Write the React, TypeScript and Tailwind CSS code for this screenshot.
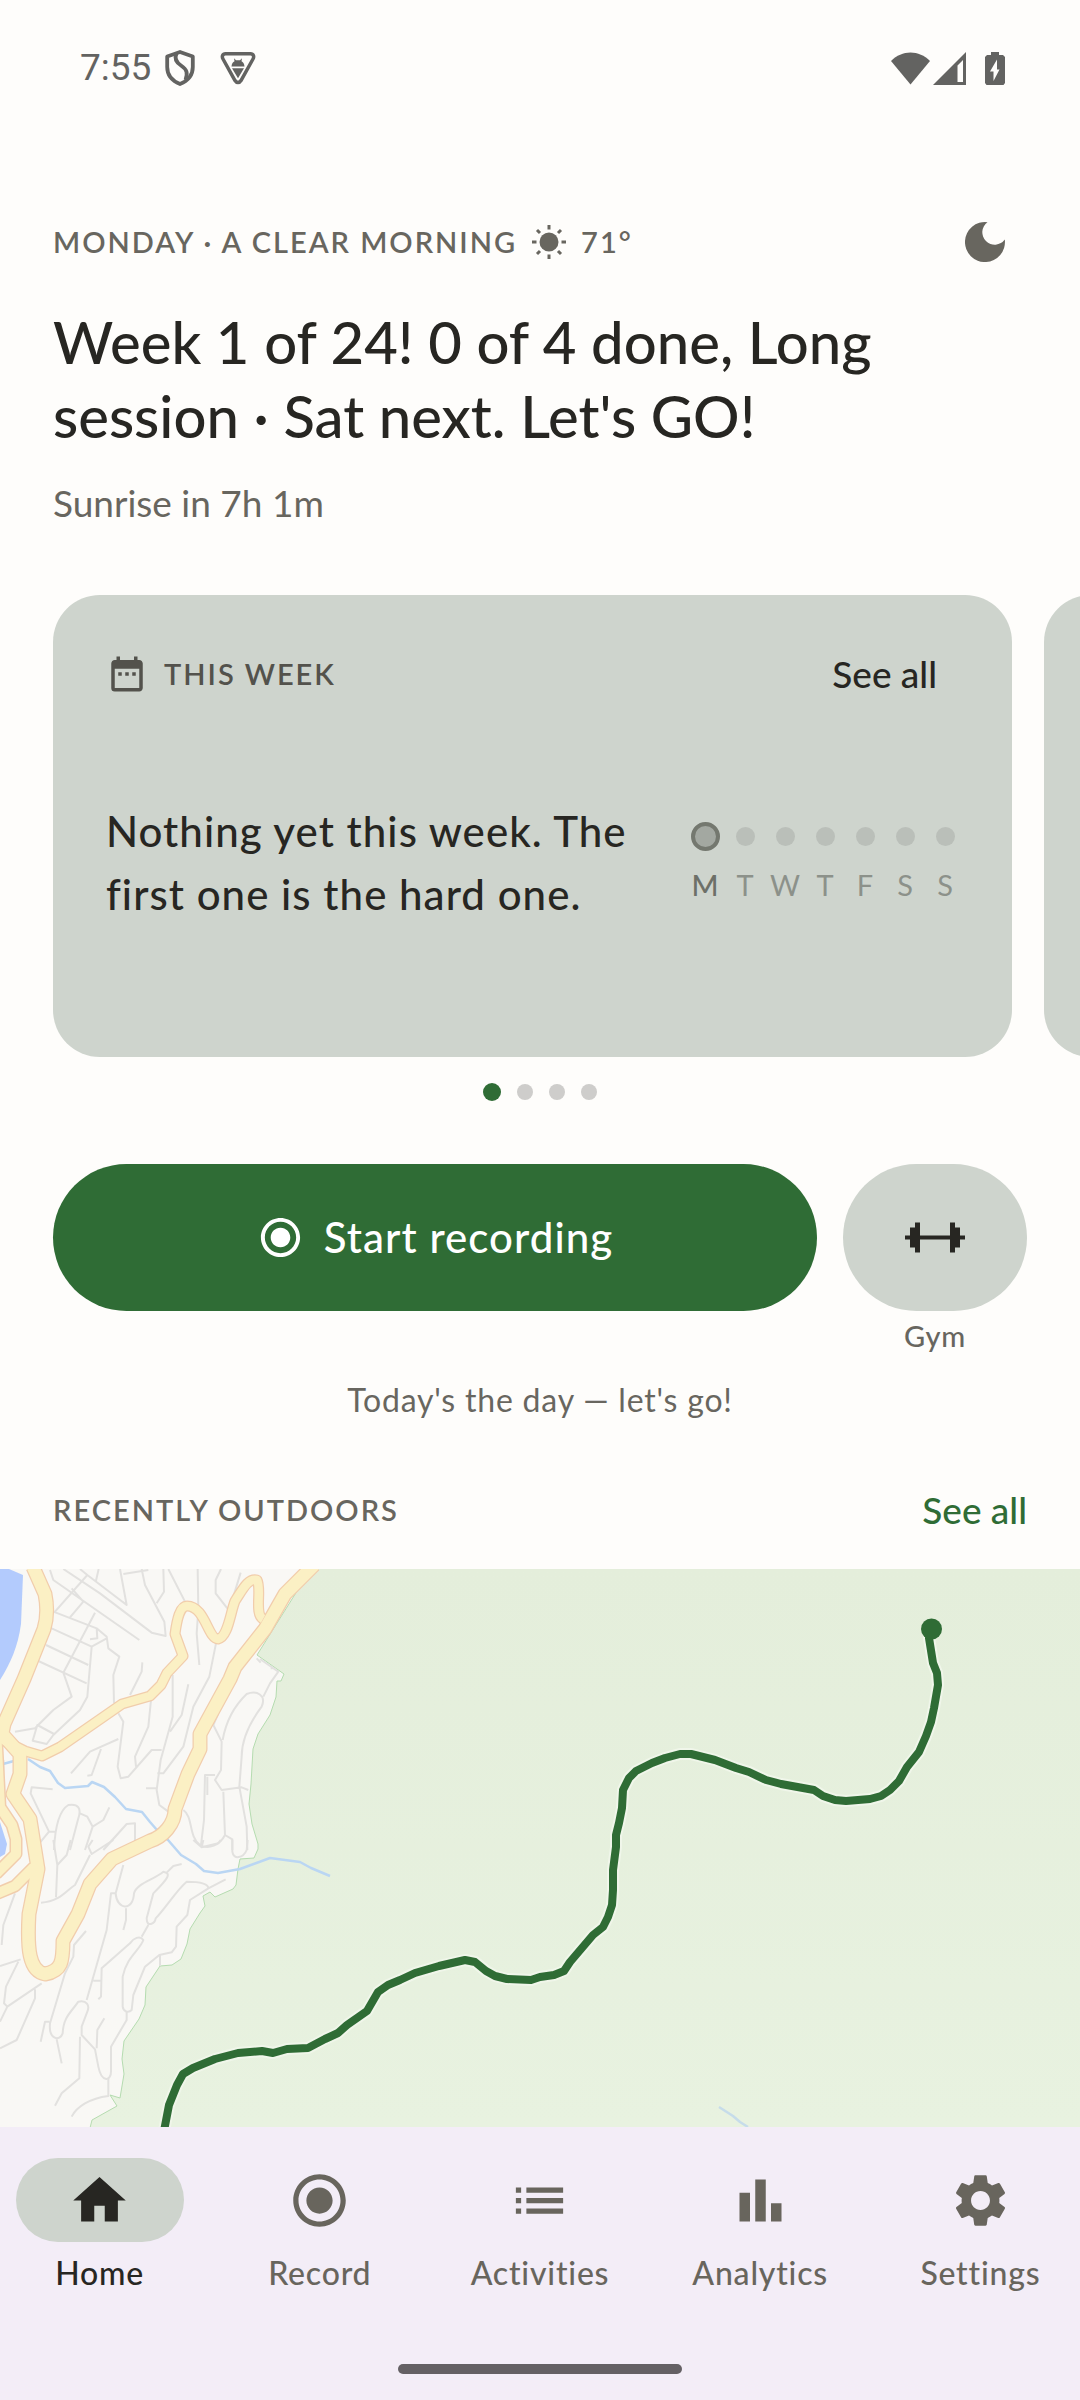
import type { ReactNode } from "react";
import {
  MdBarChart,
  MdDateRange,
  MdHome,
  MdList,
  MdRadioButtonChecked,
  MdSettings,
} from "react-icons/md";

const weekDays = ["M", "T", "W", "T", "F", "S", "S"];

const tabs: { label: string; icon: ReactNode; active?: boolean }[] = [
  { label: "Home", icon: <MdHome />, active: true },
  { label: "Record", icon: <MdRadioButtonChecked /> },
  { label: "Activities", icon: <MdList /> },
  { label: "Analytics", icon: <MdBarChart /> },
  { label: "Settings", icon: <MdSettings /> },
];

function StatusBar() {
  return (
    <div className="flex items-center justify-between pt-[42px] pr-[75px] pl-20 text-[#636361]">
      <div className="flex items-center">
        <span className="font-[Roboto] text-[37px] leading-[52px]">7:55</span>
        <svg className="ml-3.5 h-9 w-[30px]" viewBox="0 0 30 36" fill="none" stroke="currentColor" strokeWidth="3.8" strokeLinejoin="round">
          <path d="M15 2 L27.8 6.5 V17 C27.8 25 22.5 31 15 34 C7.500 31 2.200 25 2.200 17 V6.500 Z" />
          <path d="M11.500 3.500 C9 9 11.500 12.500 16 15.500 C22 19.500 23 23 20.500 30" />
        </svg>
        <svg className="ml-[25px] h-[34px] w-9" viewBox="0 0 36 34" fill="none">
          <path d="M5.500 2.800 H30.500 C33.500 2.800 34.400 5.500 33 8 L21 29.500 C19.500 32 16.500 32 15 29.500 L3 8 C1.600 5.500 2.500 2.800 5.500 2.800 Z" stroke="currentColor" strokeWidth="3.500" />
          <path d="M11.500 15.500 C11.700 12.500 13 11 14.500 10.300 L14 7.300 L16 9.300 H20 L22 7.300 L21.500 10.300 C23 11 24.300 12.500 24.500 15.500 Z M12 17.300 H24 L18 27.300 Z" fill="currentColor" />
        </svg>
      </div>
      <div className="flex items-center">
        <svg className="h-[33px] w-[39px]" viewBox="0 0 39 33" fill="currentColor">
          <path d="M0 9 C11 -2.500 28 -2.500 39 9 L19.500 32.500 Z" />
        </svg>
        <svg className="ml-[3px] h-[33px] w-[33px]" viewBox="0 0 33 33" fill="currentColor" fillRule="evenodd">
          <path d="M33 0 V33 H0 Z M30 8 L24.500 13.500 V30 H30 Z" />
        </svg>
        <svg className="ml-[19px] h-[33px] w-5" viewBox="0 0 20 33" fill="currentColor" fillRule="evenodd">
          <path d="M6 0 H14 V3 H18 L20 5 V31 L18.500 33 H1.500 L0 31 V5 L2 3 H6 Z M12 7.500 L5 19.500 H8.500 V29 L14.500 17.500 H12 Z" />
        </svg>
      </div>
    </div>
  );
}

function SunIcon() {
  return (
    <svg className="h-9 w-9" viewBox="-18 -18 36 36" stroke="currentColor" strokeWidth="3">
      <circle r="9.500" fill="currentColor" stroke="none" />
      <path d="M0 -17 V-12.500 M0 12.500 V17 M-17 0 H-12.500 M12.500 0 H17 M-12 -12 L-9 -9 M9 9 L12 12 M-12 12 L-9 9 M9 -9 L12 -12" />
    </svg>
  );
}

function MoonIcon() {
  return (
    <svg className="h-10 w-10" viewBox="0 0 40 40" fill="currentColor">
      <path d="M22.500 0.200 A12.400 12.400 0 1 0 39.800 17.500 A20 20 0 1 1 22.500 0.200 Z" />
    </svg>
  );
}

function DumbbellIcon() {
  return (
    <svg className="h-[33px] w-[60px]" viewBox="0 0 60 33" fill="currentColor">
      <path d="M0 14.500 H5 V6.500 H10 V1.500 H15 V14.500 H45 V1.500 H50 V6.500 H55 V14.500 H60 V18.500 H55 V26.500 H50 V31.500 H45 V18.500 H15 V31.500 H10 V26.500 H5 V18.500 H0 Z" />
    </svg>
  );
}

function WeekCard() {
  return (
    <article className="flex h-[462px] w-[959px] shrink-0 flex-col rounded-[47px] bg-[#ced4cd] pr-[53px] pl-[53px]">
      <header className="flex items-center justify-between pt-[53px] pr-[22px]">
        <h2 className="flex items-center gap-4 text-[29px] leading-[52px] font-semibold tracking-[2px] text-[#53524c]">
          <MdDateRange className="size-[42px]" />
          THIS WEEK
        </h2>
        <button type="button" className="text-[37px] leading-[52px] font-medium">See all</button>
      </header>
      <div className="mt-[100px] flex items-center justify-between">
        <p className="w-[540px] text-[42px] leading-[63px] font-medium tracking-wide">
          Nothing yet this week. The first one is the hard one.
        </p>
        <ul className="-mr-1.5 flex">
          {weekDays.map((day, i) => (
            <li key={i} className="flex w-10 flex-col items-center">
              <span className="flex h-[29px] items-center">
                {i === 0 ? (
                  <span className="size-[29px] rounded-full border-4 border-[#74786f] bg-[#a3a8a1]" />
                ) : (
                  <span className="size-[19px] rounded-full bg-[#babfb9]" />
                )}
              </span>
              <span
                className={
                  i === 0
                    ? "mt-[15px] text-[29px] leading-[38px] font-medium text-[#6d7068]"
                    : "mt-[15px] text-[29px] leading-[38px] text-[#8c918a]"
                }
              >
                {day}
              </span>
            </li>
          ))}
        </ul>
      </div>
    </article>
  );
}

function RouteMap() {
  return (
    <svg className="block min-h-[400px] w-full flex-1" viewBox="0 0 1080 558" preserveAspectRatio="xMidYMin slice" role="img" aria-label="Route of your last outdoor activity">
      <defs>
        <linearGradient id="forest" x1="0" y1="0" x2="0" y2="1">
          <stop offset="0" stopColor="#e4eedb" />
          <stop offset="1" stopColor="#e8f2e0" />
        </linearGradient>
      </defs>
      <rect width="1080" height="558" fill="url(#forest)" />

      {/* town */}
      <path
        d="M-5 -5 H314 L257 86 L284 105 L281 112 L277 112 L276 128 L270 146 L258 165 L253 180 L251 215 L249 235 L252 255 L258 275 L258 280 L254 289 L240 290 L238 300 L236 316 L233 320 L215 328 L210 323 L203 327 L205 337 L200 344 L190 360 L187 375 L181 390 L172 396 L160 397 L146 418 L145 436 L139 450 L124 472 L122 490 L124 505 L120 529 L110 526 L117 537 L92 551 L89 563 H-5 Z"
        fill="#f9f8f5" stroke="#b5dcb0" strokeWidth="1"
      />

      {/* bay */}
      <g fill="#b3cbfd">
        <path d="M0 0 H9 L23 6 L21 55 C18 78 10 95 0 111 Z" />
        <path d="M0 253 L7 275 L5 285 L0 288 Z" />
      </g>

      {/* side streets, upper half */}
      <g transform="translate(0 -9) scale(0.33333)" fill="none" stroke="#e2e1df" strokeWidth="6" strokeLinejoin="round">
        <path d="M150 30 L160 60 L418 240 M190 27 L300 100 L455 218 L497 228 L493 185 L435 75 L425 27 M240 27 L262 45 L165 155 M262 45 L380 135 M296 27 L288 62 M360 27 L380 135 L368 125 M370 42 L445 30 M490 27 L492 95 L470 130 M505 27 L555 125 M215 85 L250 125 L210 172" />
        <path d="M160 155 L290 205 L320 230 L325 265 L358 290 L340 345 L342 430 M290 205 L292 235 L270 238 M150 203 L275 260 L320 235 M138 255 L265 315 M115 303 L260 370 M275 260 L262 410 L240 450 L160 525 L140 552 L98 542 L112 495 L162 522 M285 158 L190 338 L215 410 L160 450 L105 505 L45 515 M427 307 L425 335 L390 405" />
        <path d="M593 27 L595 150 L590 220 L598 315 M663 27 L647 60 L647 100 L682 145 M722 38 L700 110 M648 250 L628 350 L580 440 L550 560 L490 640 L472 640 M565 373 L545 465 L510 515 M518 345 L518 470 L482 600 L470 690 L478 735 L505 755 M453 420 L445 500 L405 590 L408 620 M355 460 L370 485 L353 620 L362 655 L385 650 L455 570 L485 570 M355 537 L270 575 L213 640 M303 567 L275 645 L262 647 M438 685 H470 M10 600 V655" />
        <path d="M158 688 L95 682 L92 700 L147 815 L165 815 M147 815 L118 850 V870 M162 870 C165 800 180 750 205 735 C235 730 245 745 235 775 L210 870 M240 760 L262 770 L278 800 L255 870 M328 742 L310 780 L278 800 M310 870 L380 792 L405 790 V850" />
        <path d="M780 297 L835 335 L810 370 L790 410 M770 295 L782 308 M815 318 V328 M668 540 C675 500 690 450 740 402 C770 390 800 405 785 440 C740 500 725 550 725 590 L718 680 L740 800 L742 870 M655 460 L640 495 L665 545 L663 630 L645 660 L665 690 L725 682 L745 690 M645 645 H615 L612 780 L603 855 M622 650 V705 M670 695 L675 825 C660 855 625 870 600 855 C565 830 580 770 550 750 M675 825 L697 838 V870" />
      </g>

      {/* side streets, lower half */}
      <g transform="translate(0 271) scale(0.33333)" fill="none" stroke="#e2e1df" strokeWidth="6" strokeLinejoin="round">
        <path d="M160 0 L172 75 L168 172 M172 75 L200 45 L212 0 M278 0 L265 20 L275 42 L340 0 M123 188 C180 185 200 150 225 135 L270 45 M45 160 L10 255 L5 315 M62 358 L0 378 M55 365 L18 440 L12 490 L22 500 L125 430 M22 500 L0 545 M105 448 V475 L50 600 L0 625 M258 273 L222 315 L220 350 L195 400 L150 550 C145 600 180 605 188 580 C190 530 215 515 235 485 C260 480 270 495 262 515 L245 560 V585 L285 628 L295 680 C305 730 335 725 333 690 V620 L380 540 V515 M170 598 L185 670 M148 545 H135 L122 605" />
        <path d="M370 75 L347 160 C350 210 400 215 402 160 C410 130 460 120 490 95 C515 100 505 115 460 160 L440 235 C440 265 465 250 467 235 C500 200 530 150 560 125 C600 125 625 130 625 145 L570 180 L562 225 L530 260 L528 320 L515 337 L478 345 L435 380 L400 465 L395 510 C385 520 370 515 368 500 V410 C380 350 420 330 430 300 C420 285 400 295 390 310 L305 385 L303 470 L295 478 M625 145 L677 118 M545 72 L520 78 L500 98 M347 160 H333 L320 270 L260 480 M378 205 V240 L370 270 M445 255 L425 290 M280 422 H303 M480 345 V378 M313 535 L292 570 L290 625 M240 590 L238 715 L185 760 L165 797 M325 715 V768 C270 775 230 800 215 830" />
        <path d="M580 0 L605 22 L655 10 L662 0 M605 22 L610 0 M697 0 V35 C700 60 730 55 740 30 L743 0" />
      </g>

      {/* creeks */}
      <g fill="none" stroke="#bad6f3" strokeWidth="2.500" strokeLinejoin="round">
        <path d="M3 195 L14 192 M28 190 L40 198 L50 202 L58 214 L65 219 L88 217 L92 213 L104 218 L115 228 L126 240 L142 243 L150 253 L157 261 L168 271 L181 286 L196 295 L204 302 L218 304 L240 300 L270 289 L300 293 L311 299 L330 307" />
        <path stroke="#c6dcea" d="M719 538 L733 547 L740 553 L748 558" />
      </g>

      {/* main roads: casing below, surface above */}
      <g fill="none" strokeLinejoin="round" strokeLinecap="butt">
        <g stroke="#f1cdac">
          <path d="M-4 165 L5 172 L25 182 L42 187 L60 178 L122 135 L150 127 L161 116 L167 104 L183 87 L175 65 C177 50 180 37 187 37 C205 37 208 70 218 70 C228 68 230 45 235 32 C243 20 248 9 257 11 C262 20 254 45 263 50" strokeWidth="11" />
          <path d="M33 -2 L45 25 C48 40 47 50 44 60 L24 110 L4 155 L2 165 L20 185 L20 205 L13 225 L30 250 L38 300 L29 345 C27 380 29 402 45 405 C62 402 63 392 63 372 L78 345 L90 315 L112 290 L150 272 C163 268 175 255 175 240 L188 205 L200 180 V165 L230 110 L235 98 L265 60 L285 25 L314 -4" strokeWidth="15" />
          <path d="M-4 160 L0 238 L12 256 L16 270 V285 L-4 305 M34 298 L15 317 L-4 325" strokeWidth="13" />
        </g>
        <g stroke="#fbf0c4">
          <path d="M-4 165 L5 172 L25 182 L42 187 L60 178 L122 135 L150 127 L161 116 L167 104 L183 87 L175 65 C177 50 180 37 187 37 C205 37 208 70 218 70 C228 68 230 45 235 32 C243 20 248 9 257 11 C262 20 254 45 263 50" strokeWidth="8.500" />
          <path d="M33 -2 L45 25 C48 40 47 50 44 60 L24 110 L4 155 L2 165 L20 185 L20 205 L13 225 L30 250 L38 300 L29 345 C27 380 29 402 45 405 C62 402 63 392 63 372 L78 345 L90 315 L112 290 L150 272 C163 268 175 255 175 240 L188 205 L200 180 V165 L230 110 L235 98 L265 60 L285 25 L314 -4" strokeWidth="12.500" />
          <path d="M-4 160 L0 238 L12 256 L16 270 V285 L-4 305 M34 298 L15 317 L-4 325" strokeWidth="10" />
        </g>
      </g>

      {/* recorded route */}
      <g fill="none" strokeLinejoin="round">
        {[
          { stroke: "#f0f6ea", width: 12 },
          { stroke: "#2f6c35", width: 8 },
        ].map((line) => (
          <polyline
            key={line.width}
            stroke={line.stroke}
            strokeWidth={line.width}
            points="931,60 929,69 933,94 937,104 938,116 934,139 931,153 926,167 919,183 907,198 899,212 890,221 881,227 870,230 846,232 835,231 823,227 814,221 781,215 766,211 749,203 736,199 715,191 691,185 680,185 665,189 652,194 636,202 629,209 623,221 622,239 619,254 616,266 616,278 613,301 613,321 612,336 608,348 603,358 593,366 570,393 564,402 554,406 540,408 531,411 507,410 495,407 486,402 475,393 465,391 439,397 415,404 400,411 388,416 378,423 367,442 347,456 338,464 325,470 308,479 287,480 273,484 262,482 238,484 215,490 193,499 183,505 177,516 169,536 164,562"
          />
        ))}
      </g>
      <circle cx="931.500" cy="60" r="10.500" fill="#2f6c35" />
    </svg>
  );
}

function TabBar() {
  return (
    <nav className="shrink-0 bg-[#f3edf7]">
      <div className="grid grid-cols-5 gap-[21px] pt-[31px]">
        {tabs.map((tab) => (
          <button
            key={tab.label}
            type="button"
            aria-current={tab.active ? "page" : undefined}
            className={
              tab.active
                ? "flex flex-col items-center gap-2.5 text-[#272622]"
                : "flex flex-col items-center gap-2.5 text-[#68655d]"
            }
          >
            <span
              className={
                tab.active
                  ? "flex h-[84px] w-[168px] items-center justify-center rounded-full bg-[#ced4cd] text-[63px]"
                  : "flex h-[84px] w-[168px] items-center justify-center rounded-full text-[63px]"
              }
            >
              {tab.icon}
            </span>
            <span className="text-[32px] leading-[42px] font-medium tracking-wide">{tab.label}</span>
          </button>
        ))}
      </div>
      <div className="flex justify-center pt-[70px] pb-[26px]">
        <span className="h-2.5 w-[284px] rounded-full bg-[#646064]" />
      </div>
    </nav>
  );
}

export default function App() {
  return (
    <div className="flex min-h-screen flex-col overflow-x-hidden bg-[#fefdfb] font-[Lato,sans-serif] text-[#272622]">
      <StatusBar />

      <header className="px-[53px] pt-[121px]">
        <div className="flex items-center justify-between pr-[22px] text-[#68665f]">
          <p className="flex items-center gap-3.5 text-[29px] leading-[54px] font-semibold tracking-[2px]">
            MONDAY · A CLEAR MORNING
            <SunIcon />
            71°
          </p>
          <button type="button" aria-label="Dark mode">
            <MoonIcon />
          </button>
        </div>
        <h1 className="mt-9 text-[58px] leading-[74px] font-medium">
          Week 1 of 24! 0 of 4 done, Long session · Sat next. Let's GO!
        </h1>
        <p className="mt-6 text-[37px] leading-[52px] text-[#68665f]">Sunrise in 7h 1m</p>
      </header>

      <section className="mt-[66px]">
        <div className="flex gap-8 overflow-hidden pl-[53px]">
          <WeekCard />
          <article className="h-[462px] w-[959px] shrink-0 rounded-[47px] bg-[#ced4cd]" />
        </div>
        <div className="mt-[25px] flex h-5 items-center justify-center gap-4">
          <span className="size-[18px] rounded-full bg-[#2f6c35]" />
          <span className="size-4 rounded-full bg-[#cecdcb]" />
          <span className="size-4 rounded-full bg-[#cecdcb]" />
          <span className="size-4 rounded-full bg-[#cecdcb]" />
        </div>
      </section>

      <section className="mt-[62px] px-[53px]">
        <div className="flex items-start gap-[26px]">
          <button
            type="button"
            className="flex h-[147px] flex-1 items-center justify-center gap-5 rounded-full bg-[#2f6c35] text-[42px] font-medium tracking-wide text-white"
          >
            <MdRadioButtonChecked className="size-[47px]" />
            Start recording
          </button>
          <div className="flex w-[184px] flex-col items-center">
            <button type="button" aria-labelledby="gym-label" className="flex h-[147px] w-full items-center justify-center rounded-full bg-[#ced4cd]">
              <DumbbellIcon />
            </button>
            <span id="gym-label" className="mt-1 text-[29px] leading-[42px] font-medium tracking-wide text-[#68665f]">Gym</span>
          </div>
        </div>
        <p className="mt-[22px] text-center text-[32px] leading-[42px] tracking-wide text-[#68665f]">Today's the day — let's go!</p>
        <div className="mt-[63px] flex items-center justify-between">
          <h2 className="text-[29px] leading-[52px] font-semibold tracking-[2px] text-[#68665f]">RECENTLY OUTDOORS</h2>
          <a href="#activities" className="text-[37px] leading-[52px] font-medium text-[#2f6c35]">See all</a>
        </div>
      </section>

      <div className="mt-[33px] flex flex-1 flex-col">
        <RouteMap />
      </div>
      <TabBar />
    </div>
  );
}
